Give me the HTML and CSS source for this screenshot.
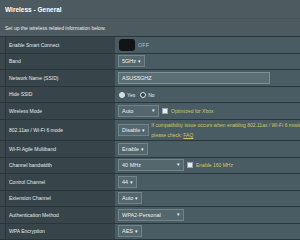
FILE: index.html
```html
<!DOCTYPE html>
<html>
<head>
    <title>Wireless - General</title>
    <meta charset="utf-8">
    <link rel="stylesheet" href="styles.css">
</head>
<body>
<div class="page">
    <h1 class="title">Wireless - General</h1>
    <p class="desc">Set up the wireless related information below.</p>
    <table class="form-table">
        <tr>
            <th>Enable Smart Connect</th>
            <td><span class="switch"></span><span class="switch-label">OFF</span></td>
        </tr>
        <tr>
            <th>Band</th>
            <td><span class="select">5GHz</span></td>
        </tr>
        <tr>
            <th>Network Name (SSID)</th>
            <td><span class="input">ASUS5GHZ</span></td>
        </tr>
        <tr>
            <th>Hide SSID</th>
            <td><span class="radio on"></span><span class="opt">Yes</span><span class="radio"></span><span class="opt">No</span></td>
        </tr>
        <tr>
            <th>Wireless Mode</th>
            <td><span class="select w-mode">Auto</span><span class="check"></span><span class="hint">Optimized for Xbox</span></td>
        </tr>
        <tr class="tall">
            <th>802.11ax / Wi-Fi 6 mode</th>
            <td>
                <div class="inline">
                    <span class="select">Disable</span>
                    <span class="hint note">If compatibility issue occurs when enabling 802.11ax / Wi-Fi 6 mode,<br>please check: <u>FAQ</u></span>
                </div>
            </td>
        </tr>
        <tr>
            <th>Wi-Fi Agile Multiband</th>
            <td><span class="select">Enable</span></td>
        </tr>
        <tr>
            <th>Channel bandwidth</th>
            <td><span class="select w-bw">40 MHz</span><span class="check"></span><span class="hint">Enable 160 MHz</span></td>
        </tr>
        <tr>
            <th>Control Channel</th>
            <td><span class="select">44</span></td>
        </tr>
        <tr>
            <th>Extension Channel</th>
            <td><span class="select">Auto</span></td>
        </tr>
        <tr>
            <th>Authentication Method</th>
            <td><span class="select w-bw">WPA2-Personal</span></td>
        </tr>
        <tr>
            <th>WPA Encryption</th>
            <td><span class="select">AES</span></td>
        </tr>
    </table>
</div>
</body>
</html>
```

FILE: styles.css
```css
body {
    margin: 0;
    background: #4d5a60;
    font-family: "Liberation Sans", Arial, sans-serif;
    color: #e8ecec;
}

.page {
    overflow: hidden;
}

.title {
    margin: 0;
    padding: 5px 0 4px 5px;
    font-size: 6.5px;
    line-height: 9px;
    font-weight: bold;
    color: #ffffff;
    border-bottom: 1px solid #47545a;
}

.desc {
    margin: 0;
    padding: 6px 0 4px 5px;
    font-size: 5px;
    line-height: 7px;
}

.form-table {
    width: 320px;
    table-layout: fixed;
    border-collapse: collapse;
    border-top: 1px solid #2c363a;
}

.form-table th, .form-table td {
    height: 15.5px;
    padding: 0;
    border-bottom: 1px solid #2c363a;
    font-size: 5px;
    white-space: nowrap;
    overflow: hidden;
}

.form-table th {
    width: 106px;
    padding-left: 9px;
    background: linear-gradient(to right, #3b474d 5px, #2c363a 5px, #2c363a 6px, #37444a 6px);
    font-weight: normal;
    text-align: left;
    color: #e6eaea;
}

.form-table td {
    padding-left: 3px;
    background: #4a5c63;
}

.form-table tr.tall th, .form-table tr.tall td {
    height: 20.5px;
}

.switch {
    display: inline-block;
    width: 16px;
    height: 12px;
    margin-left: 1px;
    background: #121416;
    border-radius: 3px;
    vertical-align: middle;
}

.switch-label {
    margin-left: 3px;
    font-size: 5.5px;
    color: #b4bfc2;
    vertical-align: middle;
}

.select, .input {
    display: inline-block;
    height: 10px;
    line-height: 10px;
    padding: 0 3px;
    background: #55676e;
    border: 1px solid #6f8388;
    vertical-align: middle;
    font-size: 5.5px;
    color: #eef0f0;
}

.select::after {
    content: "\25BE";
    margin-left: 2px;
    font-size: 4.5px;
}

.w-mode {
    width: 33px;
}

.w-bw {
    width: 58px;
}

.w-mode::after, .w-bw::after {
    float: right;
}

.input {
    width: 144px;
    background: #5b6e74;
    border-color: #7d9095;
}

.radio {
    display: inline-block;
    width: 4px;
    height: 4px;
    border: 1px solid #dfe4e4;
    border-radius: 50%;
    vertical-align: middle;
    margin-left: 1px;
}

.radio.on {
    background: #d5dbdc;
}

.radio:not(.on) {
    background: #33403f;
    border-width: 1.5px;
}

.opt {
    margin: 0 4px 0 2px;
    vertical-align: middle;
}

.check {
    display: inline-block;
    width: 4px;
    height: 4px;
    margin: 0 3px;
    background: #e8ecec;
    border: 1px solid #9aa8ab;
    vertical-align: middle;
}

.hint {
    color: #cfc56a;
    vertical-align: middle;
}

.inline {
    display: flex;
    align-items: center;
    gap: 2px;
}

.note {
    line-height: 10px;
}
```
